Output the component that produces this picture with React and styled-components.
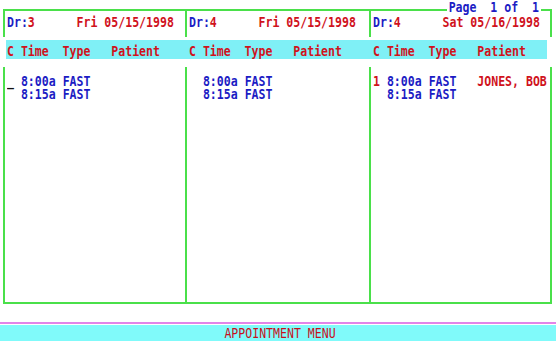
import React from 'react';
import styled, { createGlobalStyle } from 'styled-components';

const GREEN = '#4ae04a';
const BLUE = '#1c1cc4';
const RED = '#d0121c';

const days = [
  {
    dr: '3',
    date: 'Fri 05/15/1998',
    rows: [
      { code: '_', time: '8:00a', type: 'FAST' },
      { time: '8:15a', type: 'FAST' },
    ],
  },
  {
    dr: '4',
    date: 'Fri 05/15/1998',
    rows: [
      { time: '8:00a', type: 'FAST' },
      { time: '8:15a', type: 'FAST' },
    ],
  },
  {
    dr: '4',
    date: 'Sat 05/16/1998',
    rows: [
      { code: '1', time: '8:00a', type: 'FAST', patient: 'JONES, BOB' },
      { time: '8:15a', type: 'FAST' },
    ],
  },
];

const App = () => (
  <>
    <GlobalStyle />
    <Screen>
      <Frame>
        <HeaderBox>
          {days.map((d, i) => (
            <HeaderCell key={i}>
              <Line>
                <Seg $tone="blue">Dr:</Seg>
                <Seg $tone="red">{d.dr}      {d.date}</Seg>
              </Line>
            </HeaderCell>
          ))}
          <Legend>
            <Line>
              <Seg $tone="blue">Page  1 of  1</Seg>
            </Line>
          </Legend>
        </HeaderBox>

        <Band>
          {days.map((d, i) => (
            <Line key={i}>
              <Seg $tone="red">C Time  Type   Patient</Seg>
            </Line>
          ))}
        </Band>

        <BodyBox>
          {days.map((d, i) => (
            <BodyCell key={i}>
              {d.rows.map((r, j) => (
                <Line key={j}>
                  <Seg $tone={r.code === '_' ? 'ink' : 'red'}>{r.code || ' '}</Seg>{' '}
                  <Seg $tone="blue">{r.time} {r.type}</Seg>
                  {r.patient && <Seg $tone="red">   {r.patient}</Seg>}
                </Line>
              ))}
            </BodyCell>
          ))}
        </BodyBox>
      </Frame>

      <FooterRule />
      <MenuBar>
        <MenuTitle>APPOINTMENT MENU</MenuTitle>
      </MenuBar>
    </Screen>
  </>
);

export default App;

/* Styled Components */

const GlobalStyle = createGlobalStyle`
  html, body {
    margin: 0;
    padding: 0;
    background: #ffffff;
  }
`;

const Screen = styled.div`
  width: 556px;
  height: 347px;
  overflow: hidden;
  background: #ffffff;
  font-family: 'DejaVu Sans Mono', 'Liberation Mono', monospace;
  font-size: 11.55px;
  font-weight: bold;
`;

const Frame = styled.div`
  padding-top: 9px;
  margin-left: 3px;
  width: 549px;
`;

const HeaderBox = styled.div`
  position: relative;
  display: grid;
  grid-template-columns: 180px 182px 179px;
  column-gap: 2px;
  background: ${GREEN};
  border: 2px solid ${GREEN};
  border-bottom: none;
`;

const HeaderCell = styled.div`
  background: #ffffff;
  height: 26px;
  box-sizing: border-box;
  padding: 5px 0 0 2px;
`;

const Legend = styled.div`
  position: absolute;
  top: -10px;
  right: 9px;
  padding: 0 2px;
  background: #ffffff;
`;

const Line = styled.div`
  height: 13px;
  line-height: 13px;
  white-space: pre;
  transform: scaleY(1.18);
`;

const Seg = styled.span`
  color: ${(p) => (p.$tone === 'blue' ? BLUE : p.$tone === 'ink' ? '#111111' : RED)};
`;

const Band = styled.div`
  display: grid;
  grid-template-columns: 182px 184px 1fr;
  box-sizing: border-box;
  margin: 3px 0 8px 3px;
  width: 541px;
  height: 19px;
  padding: 5px 0 0 1px;
  background: #7ff0f6;
`;

const BodyBox = styled.div`
  display: grid;
  grid-template-columns: 180px 182px 179px;
  column-gap: 2px;
  height: 237px;
  box-sizing: border-box;
  background: ${GREEN};
  border: 2px solid ${GREEN};
  border-top: none;
`;

const BodyCell = styled.div`
  background: #ffffff;
  padding: 8px 0 0 2px;
`;

const FooterRule = styled.div`
  margin-top: 18px;
  height: 2px;
  background: #e284e8;
`;

const MenuBar = styled.div`
  margin-top: 1px;
  height: 16px;
  background: #80fafa;
  display: flex;
  align-items: center;
  justify-content: center;
`;

const MenuTitle = styled.div`
  color: #c8101c;
  font-weight: normal;
  line-height: 16px;
  transform: scaleY(1.25);
  padding-left: 4px;
`;
